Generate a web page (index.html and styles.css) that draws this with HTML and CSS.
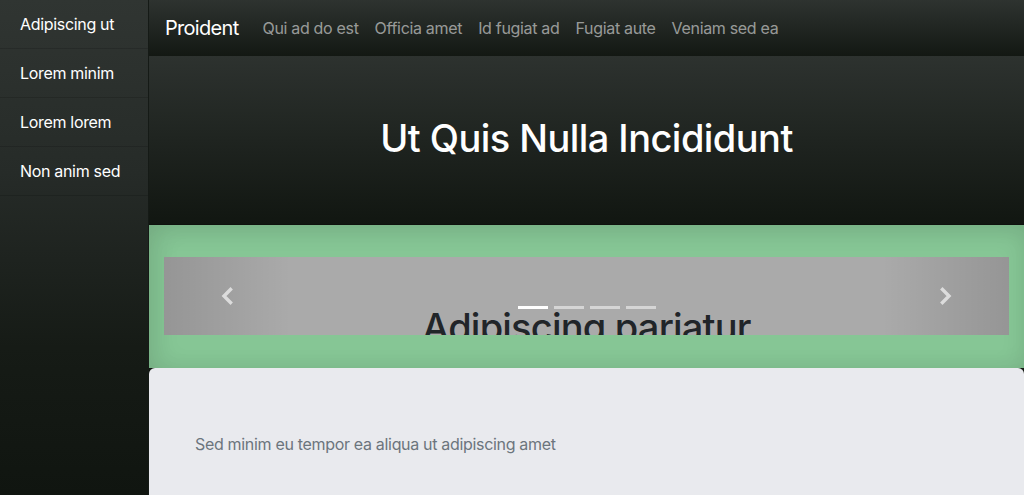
FILE: index.html
```html
<!DOCTYPE html>
<html lang="en">
<head>
<meta charset="utf-8">
<title>Proident</title>
<link rel="stylesheet" href="styles.css">
</head>
<body>
<div class="layout">
  <aside class="sidebar">
    <a class="side-item" href="#">Adipiscing ut</a>
    <a class="side-item" href="#">Lorem minim</a>
    <a class="side-item" href="#">Lorem lorem</a>
    <a class="side-item" href="#">Non anim sed</a>
  </aside>
  <main class="content">
    <nav class="navbar">
      <a class="brand" href="#">Proident</a>
      <ul class="nav-links">
        <li><a class="nav-link" href="#">Qui ad do est</a></li>
        <li><a class="nav-link" href="#">Officia amet</a></li>
        <li><a class="nav-link" href="#">Id fugiat ad</a></li>
        <li><a class="nav-link" href="#">Fugiat aute</a></li>
        <li><a class="nav-link" href="#">Veniam sed ea</a></li>
      </ul>
    </nav>
    <header class="hero">
      <h1 class="hero-title">Ut Quis Nulla Incididunt</h1>
    </header>
    <section class="feature">
      <div class="carousel">
        <div class="carousel-inner">
          <div class="carousel-caption">Adipiscing pariatur</div>
        </div>
        <div class="indicators">
          <span class="indicator active"></span>
          <span class="indicator"></span>
          <span class="indicator"></span>
          <span class="indicator"></span>
        </div>
        <a class="control control-prev" href="#" aria-label="Previous">
          <svg width="14" height="18" viewBox="0 0 14 18"><path d="M10.5 2.5 L4 9 L10.5 15.5" fill="none" stroke="currentColor" stroke-width="3.4" stroke-linecap="square"/></svg>
        </a>
        <a class="control control-next" href="#" aria-label="Next">
          <svg width="14" height="18" viewBox="0 0 14 18"><path d="M3.5 2.5 L10 9 L3.5 15.5" fill="none" stroke="currentColor" stroke-width="3.4" stroke-linecap="square"/></svg>
        </a>
      </div>
    </section>
    <section class="card">
      <p class="card-text">Sed minim eu tempor ea aliqua ut adipiscing amet</p>
    </section>
  </main>
</div>
</body>
</html>
```

FILE: styles.css
```css
* { box-sizing: border-box; }

html, body {
  margin: 0;
  padding: 0;
  height: 100%;
}

body {
  font-family: Inter, "Noto Sans", "Liberation Sans", sans-serif;
  font-size: 16px;
  line-height: 1.5;
  letter-spacing: -0.32px;
  color: #212529;
  background: #111611;
  overflow: hidden;
}

a { text-decoration: none; }

.layout {
  display: flex;
  height: 100vh;
}

.sidebar {
  width: 149px;
  flex: 0 0 149px;
  display: flex;
  flex-direction: column;
  background: linear-gradient(180deg, #303532 0%, #262b28 35%, #161b16 70%, #101510 100%);
  border-right: 1px solid #151a16;
}

.side-item {
  display: flex;
  align-items: center;
  height: 49px;
  padding: 0 20px 1px;
  color: #ffffff;
  font-size: 16px;
  border-bottom: 1px solid rgba(0, 0, 0, 0.14);
}

.content {
  flex: 1;
  display: flex;
  flex-direction: column;
  min-width: 0;
}

.navbar {
  height: 56px;
  flex: 0 0 56px;
  display: flex;
  align-items: center;
  padding: 0 16px;
  background: linear-gradient(180deg, #2e3330 0%, #131813 100%);
}

.brand {
  color: #ffffff;
  font-size: 20px;
  letter-spacing: -0.7px;
  margin-right: 16px;
}

.nav-links {
  display: flex;
  list-style: none;
  margin: 0;
  padding: 0;
}

.nav-link {
  display: block;
  padding: 8px;
  color: rgba(255, 255, 255, 0.55);
  font-size: 16px;
}

.hero {
  height: 169px;
  flex: 0 0 169px;
  display: flex;
  align-items: center;
  justify-content: center;
  background: linear-gradient(180deg, #2d322f 0%, #111611 100%);
  border-bottom: 1px solid #0e120e;
}

.hero-title {
  margin: 0 0 2px;
  color: #ffffff;
  font-size: 38px;
  font-weight: 500;
  line-height: 1.2;
  letter-spacing: -0.55px;
}

.feature {
  flex: 0 0 auto;
  padding: 32px 15px 33px;
  background: #86c695;
  box-shadow: inset 0 6px 24px rgba(0, 0, 0, 0.09), inset 10px 0 24px rgba(0, 0, 0, 0.06);
}

.carousel {
  position: relative;
  height: 78px;
  overflow: hidden;
  background: #aaaaaa;
}

.carousel-inner {
  height: 100%;
}

.carousel-caption {
  position: absolute;
  left: 15%;
  right: 15%;
  top: 48px;
  text-align: center;
  font-size: 38px;
  font-weight: 500;
  line-height: 1.2;
  letter-spacing: -0.8px;
  color: #212529;
}

.indicators {
  position: absolute;
  left: 0;
  right: 0;
  bottom: 16px;
  display: flex;
  justify-content: center;
  z-index: 2;
}

.indicator {
  width: 30px;
  height: 3px;
  margin: 10px 3px;
  background: #ffffff;
  opacity: 0.5;
}

.indicator.active { opacity: 1; }

.control {
  position: absolute;
  top: 0;
  bottom: 0;
  width: 15%;
  display: flex;
  align-items: center;
  justify-content: center;
  color: #dcdcdc;
  z-index: 1;
}

.control-prev {
  left: 0;
  background: linear-gradient(90deg, rgba(0, 0, 0, 0.12) 0%, rgba(0, 0, 0, 0) 100%);
}

.control-next {
  right: 0;
  background: linear-gradient(270deg, rgba(0, 0, 0, 0.12) 0%, rgba(0, 0, 0, 0) 100%);
}

.card {
  flex: 1;
  background: #e9eaee;
  border-radius: 6px 6px 0 0;
  padding: 64px 46px 40px;
}

.card-text {
  margin: 0;
  color: #6c757d;
  font-size: 16px;
}
```
